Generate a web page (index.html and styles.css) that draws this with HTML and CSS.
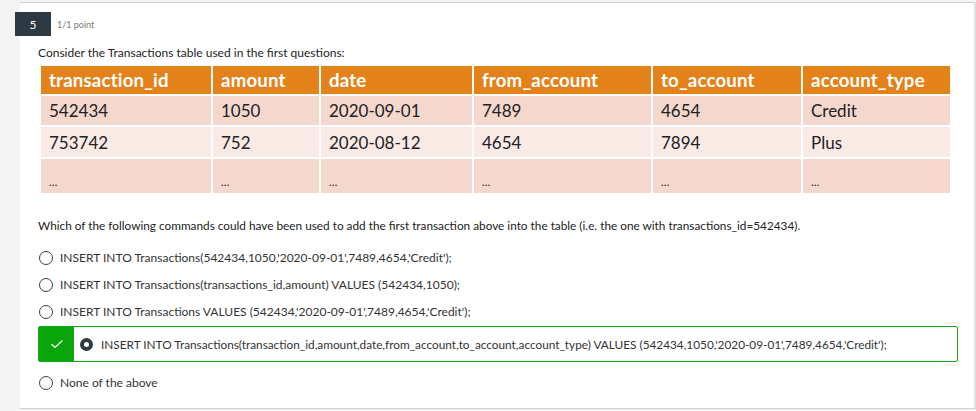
FILE: index.html
```html
<!DOCTYPE html>
<html>
<head>
<meta charset="utf-8">
<link rel="stylesheet" href="styles.css">
</head>
<body>
<div class="page">
  <div class="card">
    <div class="qhead">
      <div class="badge">5</div>
      <div class="points">1/1 point</div>
    </div>
    <p class="intro">Consider the Transactions table used in the first questions:</p>
    <table class="tbl">
      <colgroup>
        <col style="width:172px"><col style="width:108px"><col style="width:153px"><col style="width:179px"><col style="width:150px"><col style="width:149px">
      </colgroup>
      <thead>
        <tr><th>transaction_id</th><th>amount</th><th>date</th><th>from_account</th><th>to_account</th><th>account_type</th></tr>
      </thead>
      <tbody>
        <tr class="dark"><td>542434</td><td>1050</td><td>2020-09-01</td><td>7489</td><td>4654</td><td>Credit</td></tr>
        <tr class="light"><td>753742</td><td>752</td><td>2020-08-12</td><td>4654</td><td>7894</td><td>Plus</td></tr>
        <tr class="dark dots"><td>…</td><td>…</td><td>…</td><td>…</td><td>…</td><td>…</td></tr>
      </tbody>
    </table>
    <p class="question">Which of the following commands could have been used to add the first transaction above into the table (i.e. the one with transactions_id=542434).</p>
    <div class="options">
      <div class="opt"><span class="radio"></span><span>INSERT INTO Transactions(542434,1050,'2020-09-01',7489,4654,'Credit');</span></div>
      <div class="opt"><span class="radio"></span><span>INSERT INTO Transactions(transactions_id,amount) VALUES (542434,1050);</span></div>
      <div class="opt"><span class="radio"></span><span>INSERT INTO Transactions VALUES (542434,'2020-09-01',7489,4654,'Credit');</span></div>
      <div class="opt correct">
        <span class="check"><svg width="14" height="10" viewBox="0 0 14 10"><path d="M1.5 5.2 L5 8.5 L12.5 1.5" fill="none" stroke="#fff" stroke-width="1.2"/></svg></span>
        <span class="radio on"></span>
        <span class="long">INSERT INTO Transactions(transaction_id,amount,date,from_account,to_account,account_type) VALUES (542434,1050,'2020-09-01',7489,4654,'Credit');</span>
      </div>
      <div class="opt"><span class="radio"></span><span>None of the above</span></div>
    </div>
  </div>
</div>
</body>
</html>
```
FILE: styles.css
```css
html, body {
  margin: 0;
  padding: 0;
  background: #f4f4f4;
  height: 411px;
  overflow: hidden;
}
.page {
  padding-top: 2px;
  padding-left: 20px;
}
.card {
  width: 954px;
  height: 405px;
  background: #fff;
  border-top: 1px solid #c9d1d7;
  border-bottom: 1px solid #c9d1d7;
  border-right: 2px solid #e2e2e2;
  font-family: Lato, "Open Sans", sans-serif;
  color: #333;
  box-sizing: content-box;
}
.qhead {
  display: flex;
  align-items: center;
  margin-left: -5px;
  padding-top: 9px;
}
.badge {
  width: 36px;
  height: 24px;
  background: #2d3a44;
  color: #fff;
  font-size: 12px;
  display: flex;
  align-items: center;
  justify-content: center;
}
.points {
  margin-left: 6px;
  font-size: 9px;
  color: #777;
}
.intro {
  margin: 10px 0 0 18px;
  font-size: 12px;
  line-height: 14px;
  color: #222;
}
.tbl {
  margin: 4px 0 0 19px;
  border-collapse: collapse;
  table-layout: fixed;
  width: 913px;
  font-family: Lato, "Open Sans", sans-serif;
}
.tbl th, .tbl td {
  border: 2px solid #fff;
  text-align: left;
  padding: 0 8px;
  height: 29.4px;
  white-space: nowrap;
  font-family: Lato, "Open Sans", sans-serif;
}
.tbl th {
  background: #e4821a;
  color: #fff;
  font-weight: bold;
  font-size: 18.6px;
  letter-spacing: 0.2px;
  height: 28px;
}
.tbl td {
  color: #222;
  font-size: 17px;
}
.tbl tr.dark td { background: #f4d7cd; }
.tbl tr.light td { background: #faeae6; }
.tbl tr.dots td {
  font-size: 11px;
  vertical-align: bottom;
  padding-bottom: 5px;
}
.question {
  margin: 24px 0 0 18px;
  font-size: 11.8px;
  line-height: 14px;
  color: #222;
}
.options {
  margin: 11px 0 0 18px;
}
.opt {
  display: flex;
  align-items: center;
  font-size: 12px;
  color: #333;
  height: 27px;
}
.radio {
  width: 12px;
  height: 12px;
  border: 1.5px solid #3a3f44;
  border-radius: 50%;
  margin-right: 7px;
  margin-left: 1px;
  flex: none;
}
.radio.on {
  width: 5px;
  height: 5px;
  border: 4px solid #2d3a44;
  background: #fff;
  margin-left: 6px;
  margin-right: 8px;
}
.opt.correct {
  width: 918px;
  height: 34px;
  border: 1px solid #13aa13;
  border-radius: 2px;
  margin: 1px 0 7px 0;
}
.long {
  font-size: 11.8px;
}
.check {
  width: 35px;
  height: 34px;
  background: #0aa50a;
  display: flex;
  align-items: center;
  justify-content: center;
  flex: none;
}
```
